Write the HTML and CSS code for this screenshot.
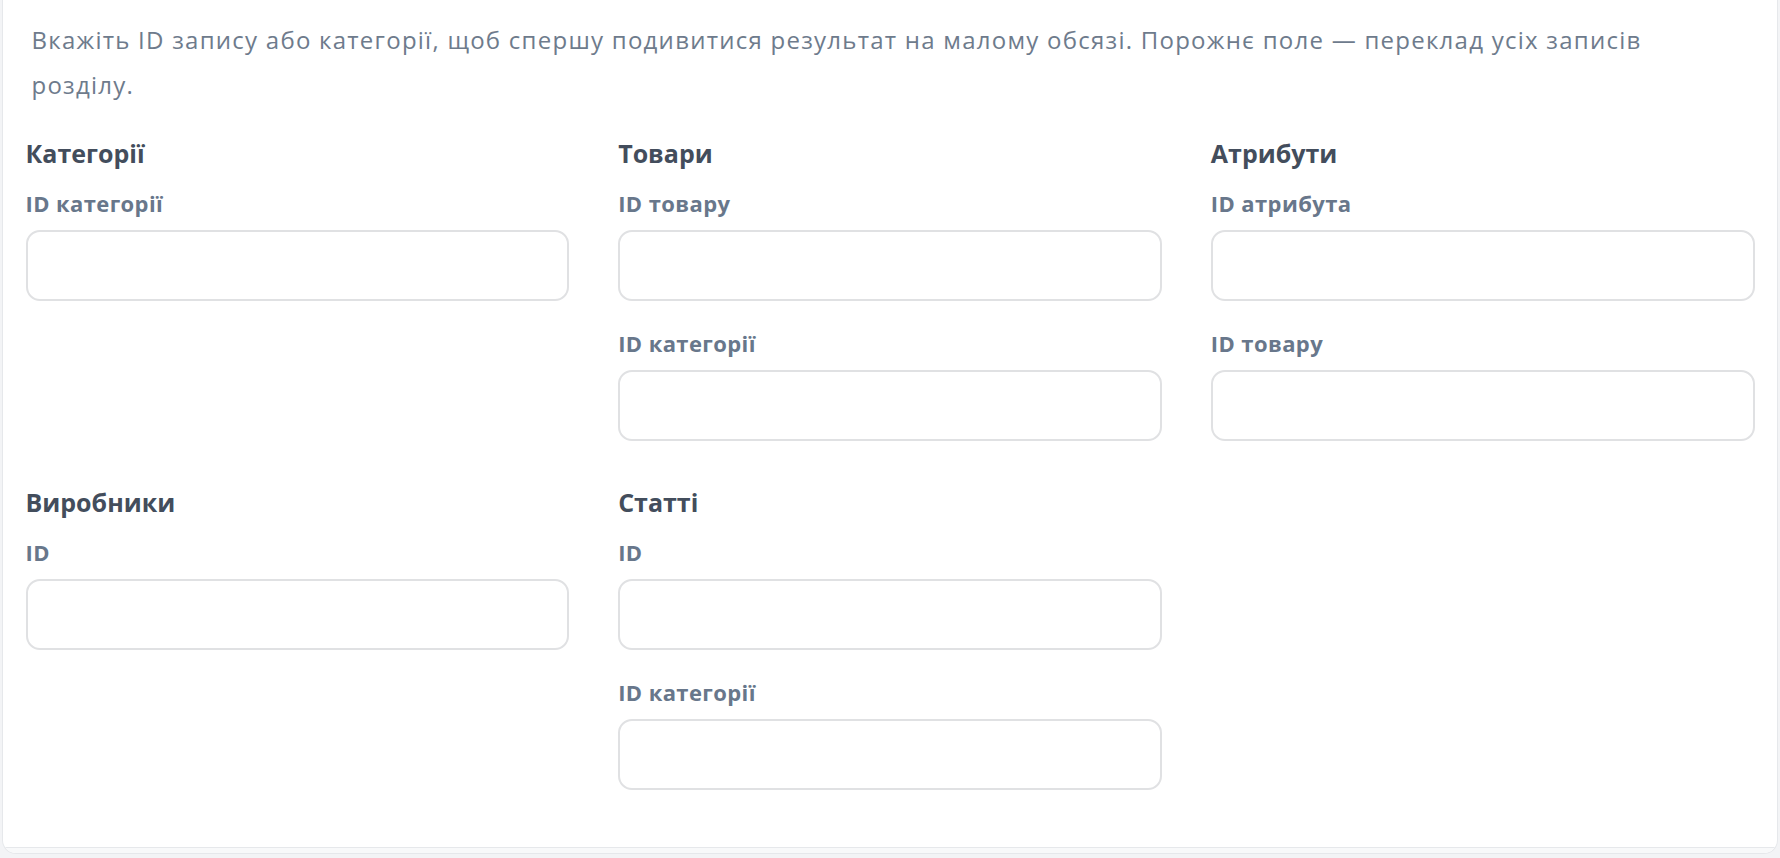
FILE: index.html
```html
<!DOCTYPE html>
<html lang="uk">
<head>
    <meta charset="UTF-8">
    <meta name="viewport" content="width=device-width, initial-scale=1.0">
    <title>Фільтр перекладу</title>
    <link rel="stylesheet" href="styles.css">
</head>
<body>

<div class="card">
    <div class="card-body">
        <p class="intro">Вкажіть ID запису або категорії, щоб спершу подивитися результат на малому обсязі. Порожнє поле — переклад усіх записів розділу.</p>

        <div class="sections">
            <div class="section">
                <h3>Категорії</h3>
                <div class="field">
                    <label for="cat-id">ID категорії</label>
                    <input type="text" id="cat-id">
                </div>
            </div>

            <div class="section">
                <h3>Товари</h3>
                <div class="field">
                    <label for="prod-id">ID товару</label>
                    <input type="text" id="prod-id">
                </div>
                <div class="field">
                    <label for="prod-cat">ID категорії</label>
                    <input type="text" id="prod-cat">
                </div>
            </div>

            <div class="section">
                <h3>Атрибути</h3>
                <div class="field">
                    <label for="attr-id">ID атрибута</label>
                    <input type="text" id="attr-id">
                </div>
                <div class="field">
                    <label for="attr-prod">ID товару</label>
                    <input type="text" id="attr-prod">
                </div>
            </div>

            <div class="section">
                <h3>Виробники</h3>
                <div class="field">
                    <label for="man-id">ID</label>
                    <input type="text" id="man-id">
                </div>
            </div>

            <div class="section">
                <h3>Статті</h3>
                <div class="field">
                    <label for="art-id">ID</label>
                    <input type="text" id="art-id">
                </div>
                <div class="field">
                    <label for="art-cat">ID категорії</label>
                    <input type="text" id="art-cat">
                </div>
            </div>
        </div>
    </div>
    <div class="card-footer"></div>
</div>

</body>
</html>
```

FILE: styles.css
```css
body {
    font-family: "Open Sans", "Noto Sans", sans-serif;
    margin: 0;
    padding: 0;
    background-color: #f3f4f6;
    color: #434d5c;
}

.card {
    margin: 0 2px;
    background: white;
    border: 1.5px solid #e6e8eb;
    border-top: none;
    border-radius: 0 0 14px 14px;
    overflow: hidden;
}

.card-body {
    padding: 17px 22.5px 57px;
}

.intro {
    margin: 0 0 29px;
    padding: 0 60px 0 6px;
    font-size: 24px;
    line-height: 45px;
    letter-spacing: 1.25px;
    color: #6e7b8c;
}

.sections {
    display: grid;
    grid-template-columns: repeat(3, 1fr);
    column-gap: 49px;
    row-gap: 44px;
}

.section h3 {
    margin: 0 0 18px;
    font-size: 25px;
    line-height: 34px;
    font-weight: 700;
    color: #434d5c;
}

.field {
    display: flex;
    flex-direction: column;
}

.field + .field {
    margin-top: 27px;
}

.field label {
    margin-bottom: 12px;
    font-size: 22px;
    line-height: 30px;
    font-weight: 700;
    letter-spacing: 0.4px;
    color: #68778b;
}

.field input {
    box-sizing: border-box;
    height: 71px;
    padding: 0 18px;
    border: 2px solid #e0e1e3;
    border-radius: 14px;
    font: inherit;
    font-size: 22px;
    color: #434d5c;
    background: white;
}

.field input:focus {
    outline: none;
    border-color: #b8c2cf;
}

.card-footer {
    height: 5px;
    border-top: 1.5px solid #e6e8eb;
    background: #f8f9fa;
}
```
